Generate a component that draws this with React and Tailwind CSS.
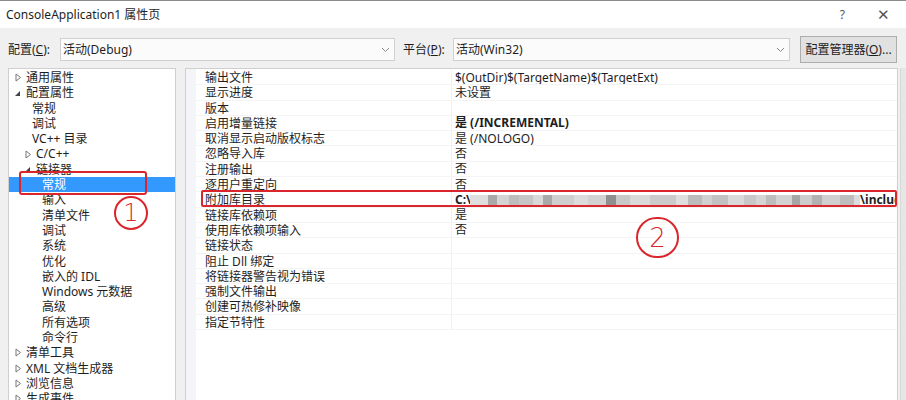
import React from 'react';

const treeRows = [
  { text: '通用属性', level: 0, arrow: 'closed' },
  { text: '配置属性', level: 0, arrow: 'open' },
  { text: '常规', level: 1 },
  { text: '调试', level: 1 },
  { text: 'VC++ 目录', level: 1 },
  { text: 'C/C++', level: 1, arrow: 'closed' },
  { text: '链接器', level: 1, arrow: 'open' },
  { text: '常规', level: 2, selected: true },
  { text: '输入', level: 2 },
  { text: '清单文件', level: 2 },
  { text: '调试', level: 2 },
  { text: '系统', level: 2 },
  { text: '优化', level: 2 },
  { text: '嵌入的 IDL', level: 2 },
  { text: 'Windows 元数据', level: 2 },
  { text: '高级', level: 2 },
  { text: '所有选项', level: 2 },
  { text: '命令行', level: 2 },
  { text: '清单工具', level: 0, arrow: 'closed' },
  { text: 'XML 文档生成器', level: 0, arrow: 'closed' },
  { text: '浏览信息', level: 0, arrow: 'closed' },
  { text: '生成事件', level: 0, arrow: 'closed' },
];

const props = [
  ['输出文件', '$(OutDir)$(TargetName)$(TargetExt)'],
  ['显示进度', '未设置'],
  ['版本', ''],
  ['启用增量链接', '是 (/INCREMENTAL)', true],
  ['取消显示启动版权标志', '是 (/NOLOGO)'],
  ['忽略导入库', '否'],
  ['注册输出', '否'],
  ['逐用户重定向', '否'],
  ['附加库目录', 'blur', true],
  ['链接库依赖项', '是'],
  ['使用库依赖项输入', '否'],
  ['链接状态', ''],
  ['阻止 Dll 绑定', ''],
  ['将链接器警告视为错误', ''],
  ['强制文件输出', ''],
  ['创建可热修补映像', ''],
  ['指定节特性', ''],
];

// pixelated blur over the path
const blurBlocks = [
  'w-[18px] bg-[#dedede]', 'w-[9px] bg-[#a9a9a9]', 'w-[12px] bg-[#d4d4d4]', 'w-[10px] bg-[#bdbdbd]',
  'w-[14px] bg-[#c6c6c6]', 'w-[10px] bg-[#d8d8d8]', 'w-[9px] bg-[#a8a8a8]', 'w-[22px] bg-[#cfcfcf]',
  'w-[14px] bg-[#dcdcdc]', 'w-[18px] bg-[#d2d2d2]', 'w-[10px] bg-[#8f8f8f]', 'w-[14px] bg-[#c8c8c8]',
  'w-[20px] bg-[#d9d9d9]', 'w-[26px] bg-[#cbcbcb]', 'w-[12px] bg-[#dedede]', 'w-[14px] bg-[#bcbcbc]',
  'w-[10px] bg-[#d0d0d0]', 'w-[16px] bg-[#c2c2c2]', 'w-[16px] bg-[#d9d9d9]', 'w-[12px] bg-[#c8c8c8]',
  'w-[10px] bg-[#d5d5d5]', 'w-[10px] bg-[#bdbdbd]', 'w-[16px] bg-[#d2d2d2]', 'w-[8px] bg-[#a6a6a6]',
  'w-[12px] bg-[#cccccc]', 'w-[10px] bg-[#b2b2b2]', 'w-[18px] bg-[#d0d0d0]', 'w-[14px] bg-[#bdbdbd]',
  'w-[6px] bg-[#dcdcdc]',
];

function Arrow({ type }) {
  if (type === 'open') {
    return (
      <svg width="8" height="8" viewBox="0 0 8 8" className="shrink-0">
        <path d="M6 2 L6 7 L1 7 Z" fill="#444" />
      </svg>
    );
  }
  return (
    <svg width="8" height="9" viewBox="0 0 8 9" className="shrink-0">
      <path d="M2 1 L6.5 4.5 L2 8 Z" fill="none" stroke="#777" strokeWidth="1" />
    </svg>
  );
}

function Chevron() {
  return (
    <svg width="9" height="6" viewBox="0 0 9 6">
      <path d="M1 1 L4.5 4.5 L8 1" fill="none" stroke="#888" strokeWidth="1" />
    </svg>
  );
}

export default function App() {
  return (
    <div className="relative w-[906px] h-[400px] overflow-hidden bg-[#f0f0f0] text-[12px] text-[#1e1e1e] font-['Noto_Sans','Noto_Sans_CJK_SC',sans-serif]">
      {/* title bar */}
      <div className="h-[28px] bg-white border-t border-[#8a8a8a] flex items-center justify-between pl-[6px] pr-[16px]">
        <span className="text-[12px]">ConsoleApplication1 属性页</span>
        <div className="flex items-center gap-[32px] text-[#555]">
          <span className="text-[12px]">?</span>
          <span className="text-[15px] font-light">✕</span>
        </div>
      </div>

      {/* config row */}
      <div className="flex items-center h-[27px] mt-[8px] pl-[8px]">
        <span className="w-[52px]">配置(<u>C</u>):</span>
        <div className="w-[335px] h-[23px] bg-[#fbfbfb] border border-[#d0d0d0] flex items-center justify-between px-[2px] pr-[4px]">
          <span>活动(Debug)</span>
          <Chevron />
        </div>
        <span className="ml-[8px] w-[50px]">平台(<u>P</u>):</span>
        <div className="w-[337px] h-[23px] bg-[#fbfbfb] border border-[#d0d0d0] flex items-center justify-between px-[2px] pr-[4px]">
          <span>活动(Win32)</span>
          <Chevron />
        </div>
        <div className="ml-[10px] w-[97px] h-[27px] bg-[#e1e1e1] border border-[#adadad] flex items-center justify-center">
          配置管理器(<u>O</u>)...
        </div>
      </div>

      {/* panels */}
      <div className="flex mt-[5px] pl-[8px]">
        <div className="w-[168px] shrink-0 h-[340px] bg-white border border-[#cfcfcf] pt-[1px]">
          {treeRows.map((r, i) => (
            <div
              key={i}
              className={`h-[15.3px] leading-[15.3px] flex items-center whitespace-nowrap ${
                r.selected ? 'bg-[#3399ff] text-white' : ''
              } ${r.level === 0 ? 'pl-[5px]' : r.level === 1 ? 'pl-[15px]' : 'pl-[31px]'}`}
            >
              {r.level < 2 && (
                <span className="w-[10px] flex items-center">{r.arrow && <Arrow type={r.arrow} />}</span>
              )}
              <span className={r.level === 1 && !r.arrow ? 'ml-[-2px]' : 'ml-[2px]'}>{r.text}</span>
            </div>
          ))}
        </div>

        <div className="ml-[9px] w-[713px] shrink-0 h-[340px] bg-white border border-[#cfcfcf] flex overflow-hidden">
          <div className="w-[10px] shrink-0 bg-[#f3f5f9]" />
          <div className="flex-1 min-w-0 pt-[1px]">
            {props.map(([name, value, bold], i) => (
              <div key={i} className="h-[15.3px] leading-[15.3px] flex border-b border-[#f4f4f4] whitespace-nowrap">
                <div className="w-[256px] shrink-0 pl-[9px] border-r border-[#f0f0f0]">{name}</div>
                <div className={`flex-1 min-w-0 pl-[3px] overflow-hidden flex items-center ${bold ? 'font-bold' : ''}`}>
                  {value === 'blur' ? (
                    <>
                      <span className="shrink-0">C:\</span>
                      <div className="flex shrink-0 h-[10px] ml-[-1px]">
                        {blurBlocks.map((c, j) => (
                          <div key={j} className={`h-full shrink-0 ${c}`} />
                        ))}
                      </div>
                      <span className="shrink-0">\include</span>
                    </>
                  ) : (
                    value
                  )}
                </div>
              </div>
            ))}
          </div>
        </div>
        <div className="ml-[2px] w-[7px] shrink-0 h-[340px] bg-[#e6e6e6] border-l border-[#d8d8d8]" />
      </div>

      {/* annotations */}
      <div className="absolute left-[19px] top-[171px] w-[128px] h-[24px] border-2 border-[#d9252b] rounded-[3px]" />
      <div className="absolute left-[114px] top-[196px] w-[34px] h-[34px] rounded-full border-2 border-[#d9252b] flex items-center justify-center text-[#d9252b] text-[24px] leading-none font-['DejaVu_Sans',sans-serif] font-light">
        1
      </div>
      <div className="absolute left-[201px] top-[190px] w-[696px] h-[17px] border-2 border-[#d9252b] rounded-[2px]" />
      <div className="absolute left-[636px] top-[217px] w-[43px] h-[41px] rounded-full border-2 border-[#d9252b] flex items-center justify-center text-[#d9252b] text-[26px] leading-none font-['DejaVu_Sans',sans-serif] font-light">
        2
      </div>
    </div>
  );
}
